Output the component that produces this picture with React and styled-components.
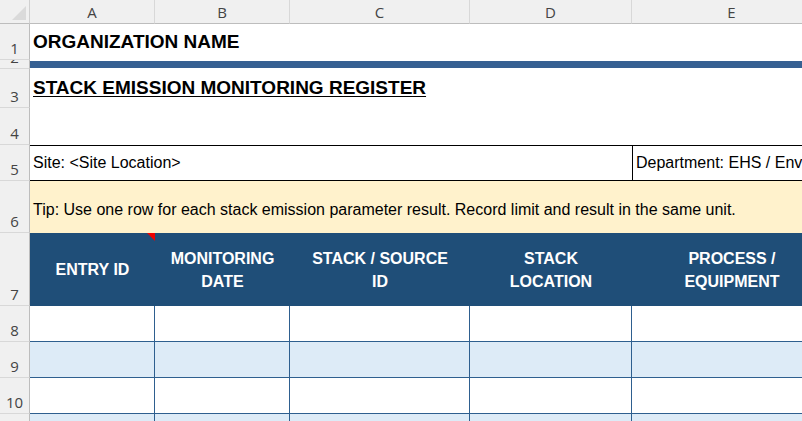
import React from "react";
import styled, { createGlobalStyle } from "styled-components";

const G = createGlobalStyle`
  html,body{margin:0;padding:0;background:#fff;overflow:hidden;}
  #root{width:802px;height:421px;overflow:hidden;}
`;

const Sheet = styled.div`
  display:grid;
  grid-template-columns:30px 125px 135px 180px 162px 200px;
  grid-template-rows:24px 36px 9px 39px 37px 36px 52px 73px 36px 36px 36px 36px;
  font-family:"Liberation Sans",Arial,sans-serif;
  width:832px;
`;
const Corner = styled.div`
  background:#f0f0f0;border-right:1px solid #d0d0d0;border-bottom:1px solid #bdbdbd;
  position:relative;
  &::after{content:"";position:absolute;right:3px;bottom:3px;border-left:14px solid transparent;border-bottom:14px solid #dadada;}
`;
const ColHead = styled.div`
  background:#f0f0f0;border-right:1px solid #d8d8d8;border-bottom:1px solid #bdbdbd;
  display:flex;align-items:center;justify-content:center;
  font-family:"Open Sans",sans-serif;font-size:15px;color:#444;
`;
const RowHead = styled.div`
  background:#f0f0f0;border-bottom:1px solid #d8d8d8;border-right:1px solid #bdbdbd;
  display:flex;align-items:flex-end;justify-content:center;padding-bottom:1px;
  font-family:"Open Sans",sans-serif;font-size:15px;color:#444;box-sizing:border-box;
  overflow:hidden;line-height:20px;
`;
const Span = styled.div`
  grid-column:2 / -1;display:flex;align-items:${p=>p.$align||"center"};
  padding:0 3px;box-sizing:border-box;background:${p=>p.$bg||"#fff"};
`;
const Title = styled.div`font-weight:bold;font-size:19px;color:#000;`;
const Sub = styled.div`font-weight:bold;font-size:19px;text-decoration:underline;text-underline-offset:2px;padding-top:8px;`;
const Band = styled.div`grid-column:2 / -1;background:#366092;margin:1px 0;`;
const InfoCell = styled.div`
  grid-column:${p=>p.$col};border-top:1px solid #000;border-bottom:1px solid #000;
  border-left:${p=>p.$left?"1px solid #000":"none"};
  display:flex;align-items:center;padding:0 3px;font-size:16px;box-sizing:border-box;
  white-space:nowrap;overflow:hidden;
`;
const Tip = styled(Span)`font-size:16px;padding-top:6px;white-space:nowrap;overflow:hidden;`;
const HeadCell = styled.div`
  background:#1f4e78;color:#fff;font-weight:bold;font-size:16px;text-align:center;
  display:flex;align-items:center;justify-content:center;line-height:23px;position:relative;
`;
const Flag = styled.div`position:absolute;top:0;right:0;border-left:8px solid transparent;border-top:8px solid #e00;`;
const Cell = styled.div`
  background:${p=>p.$alt?"#ddebf7":"#fff"};
  border-right:1px solid #2e5f8f;border-bottom:1px solid #2e5f8f;
`;

const cols=["A","B","C","D","E"];
const heads=["ENTRY ID","MONITORING\nDATE","STACK / SOURCE\nID","STACK\nLOCATION","PROCESS /\nEQUIPMENT"];

export default function App(){
  return <>
    <G/>
    <Sheet>
      <Corner/>
      {cols.map(c=><ColHead key={c}>{c}</ColHead>)}
      <RowHead>1</RowHead><Span><Title>ORGANIZATION NAME</Title></Span>
      <RowHead>2</RowHead><Band/>
      <RowHead>3</RowHead><Span $align="flex-start"><Sub>STACK EMISSION MONITORING REGISTER</Sub></Span>
      <RowHead>4</RowHead><Span/>
      <RowHead>5</RowHead>
      <InfoCell $col="2 / 6">Site: &lt;Site Location&gt;</InfoCell>
      <InfoCell $col="6 / 7" $left>Department: EHS / Environment</InfoCell>
      <RowHead>6</RowHead>
      <Tip $bg="#fff2cc">Tip: Use one row for each stack emission parameter result. Record limit and result in the same unit.</Tip>
      <RowHead>7</RowHead>
      {heads.map((h,i)=><HeadCell key={i}>{h.split("\n").map((l,j)=><React.Fragment key={j}>{j>0&&<br/>}{l}</React.Fragment>)}{i===0&&<Flag/>}</HeadCell>)}
      {[8,9,10,11].map((r,ri)=><React.Fragment key={r}>
        <RowHead>{r}</RowHead>
        {[0,1,2,3,4].map(c=><Cell key={c} $alt={ri%2===1}/>)}
      </React.Fragment>)}
    </Sheet>
  </>;
}
